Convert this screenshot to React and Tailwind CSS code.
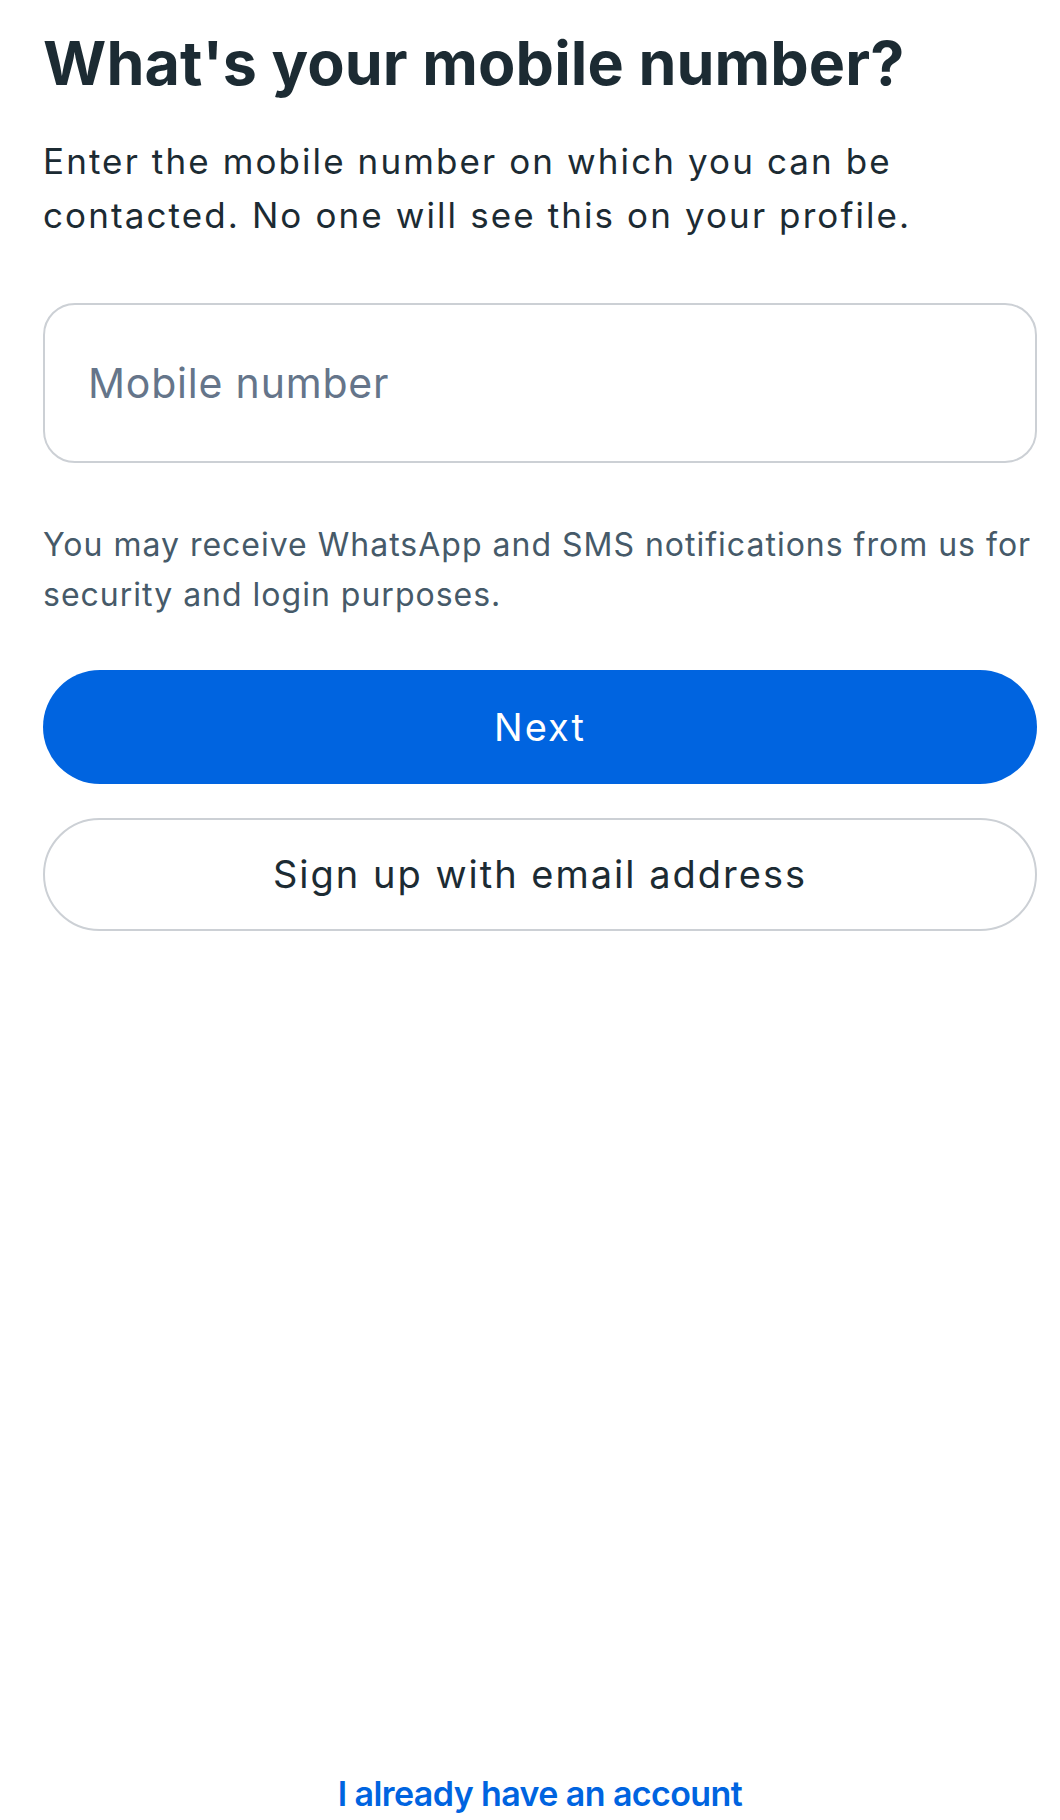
export default function App() {
  return (
    <div
      className="w-[1060px] min-h-[1820px] bg-white flex flex-col pl-[43px] pr-[23px]"
      style={{ fontFamily: "Inter, 'Liberation Sans', sans-serif" }}
    >
      <h1 className="mt-[27px] text-[61px] leading-[72px] font-bold text-[#1c2b33] tracking-[0.1px] whitespace-nowrap">
        What's your mobile number?
      </h1>
      <p className="mt-[35px] text-[35px] leading-[54px] text-[#1c2b33] tracking-[2.1px] whitespace-nowrap">
        Enter the mobile number on which you can be
        <br />
        contacted. No one will see this on your profile.
      </p>
      <div className="mt-[61px] h-[160px] rounded-[32px] border-2 border-[#ccd0d5] flex items-center pl-[43px]">
        <span className="text-[41px] text-[#65758a] tracking-[0.8px] leading-none">Mobile number</span>
      </div>
      <p className="mt-[57px] text-[32px] leading-[50px] text-[#465a69] tracking-[1px] whitespace-nowrap">
        You may receive WhatsApp and SMS notifications from us for
        <br />
        security and login purposes.
      </p>
      <button className="mt-[50px] h-[114px] w-full rounded-full bg-[#0064e0] text-white text-[38px] tracking-[2px] flex items-center justify-center">
        Next
      </button>
      <button className="mt-[34px] h-[113px] w-full rounded-full border-2 border-[#ccd0d5] bg-white text-[#1c2b33] text-[38px] tracking-[2px] flex items-center justify-center">
        Sign up with email address
      </button>
      <div className="flex-1" />
      <div className="flex justify-center pb-[4px]">
        <span className="text-[34px] leading-[44px] font-semibold text-[#0064e0] tracking-[-0.6px]">
          I already have an account
        </span>
      </div>
    </div>
  );
}
